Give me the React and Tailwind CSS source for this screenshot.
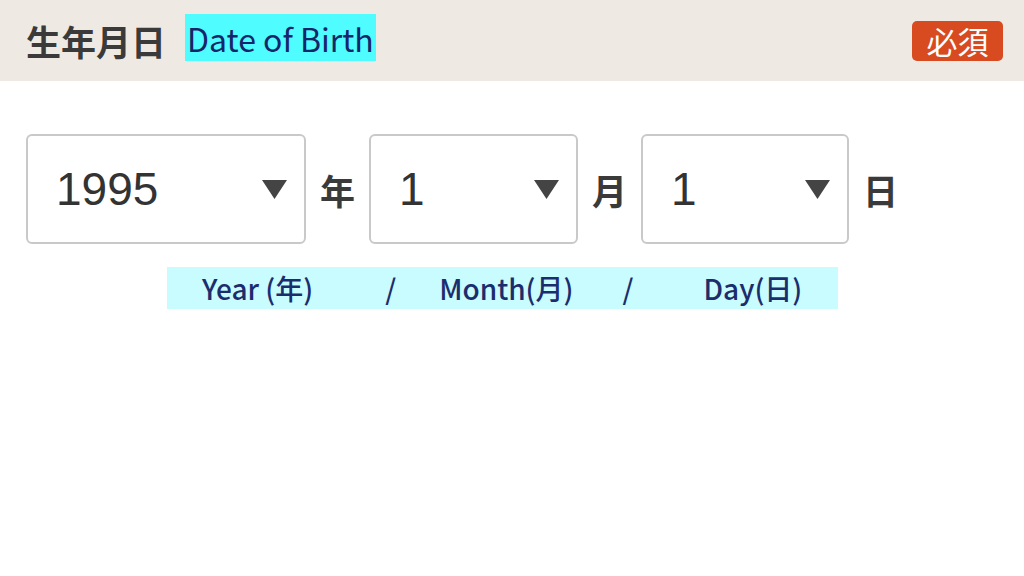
import React from "react";

const jp = { fontFamily: '"Noto Sans CJK JP", "Noto Sans", sans-serif' };

const Caret = () => (
  <svg width="25" height="19" viewBox="0 0 25 19" className="shrink-0">
    <polygon points="0,0 25,0 12.5,19" fill="#444444" />
  </svg>
);

const SelectBox = ({ value, width }) => (
  <div
    className={`${width} h-[110px] shrink-0 border-2 border-[#c9c9c9] rounded-[6px] bg-white flex items-center justify-between pl-[28px] pr-[17px]`}
  >
    <span
      className="text-[46px] text-[#333333] leading-none"
      style={{ fontFamily: '"Liberation Sans", "Noto Sans CJK JP", sans-serif' }}
    >
      {value}
    </span>
    <Caret />
  </div>
);

const Unit = ({ children }) => (
  <span className="w-[35px] shrink-0 text-center text-[35px] font-bold text-[#3a3a3a] leading-none">
    {children}
  </span>
);

export default function App() {
  return (
    <div className="w-[1024px] h-[576px] bg-white overflow-hidden" style={jp}>
      <div className="h-[81px] bg-[#eeeae3] flex items-center justify-between pl-[26px] pr-[21px]">
        <div className="flex items-center">
          <span className="text-[35px] font-bold text-[#3a3a3a] leading-none">生年月日</span>
          <span className="ml-[19px] mb-[6px] h-[47px] px-[2px] bg-[#4ffcff] text-[#172569] text-[32px] leading-none flex items-center">
            Date of Birth
          </span>
        </div>
        <span className="w-[91px] h-[40px] rounded-[5px] bg-[#d84a1f] text-white text-[31px] leading-none flex items-center justify-center">
          必須
        </span>
      </div>

      <div className="mt-[53px] pl-[26px] flex items-center gap-[14px]">
        <SelectBox value="1995" width="w-[280px]" />
        <Unit>年</Unit>
        <SelectBox value="1" width="w-[209px]" />
        <Unit>月</Unit>
        <SelectBox value="1" width="w-[208px]" />
        <Unit>日</Unit>
      </div>

      <div className="mt-[23px] ml-[167px] w-[671px] h-[42px] bg-[#c8fcfe] flex items-center pl-[35px] text-[28px] font-medium text-[#1c2d6d] leading-none">
        <span>Year (年)</span>
        <span className="ml-[72px]">/</span>
        <span className="ml-[43px]">Month(月)</span>
        <span className="ml-[49px]">/</span>
        <span className="ml-[70px]">Day(日)</span>
      </div>
    </div>
  );
}
